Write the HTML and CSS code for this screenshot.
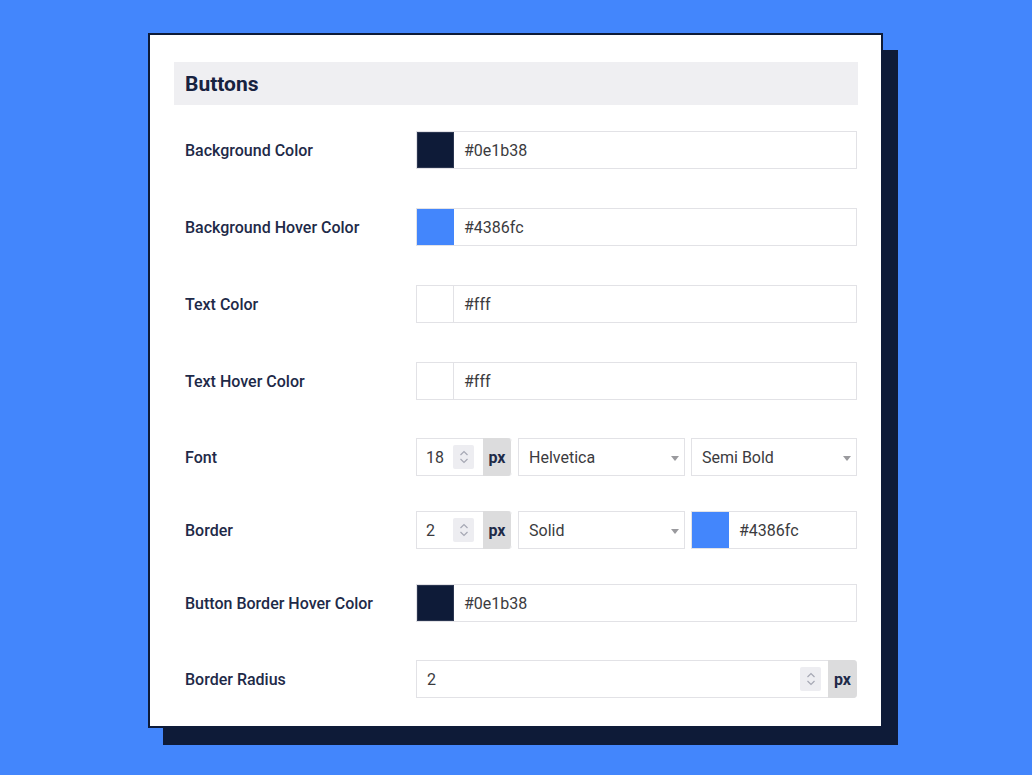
FILE: index.html
```html
<!DOCTYPE html>
<html>
<head>
<meta charset="utf-8">
<link rel="stylesheet" href="styles.css">
</head>
<body>
<div class="card">
  <div class="section-title">Buttons</div>

  <div class="row g-first">
    <div class="label">Background Color</div>
    <div class="field color-field">
      <span class="swatch sw-dark"></span><span class="value">#0e1b38</span>
    </div>
  </div>

  <div class="row g-l">
    <div class="label">Background Hover Color</div>
    <div class="field color-field">
      <span class="swatch sw-blue"></span><span class="value">#4386fc</span>
    </div>
  </div>

  <div class="row g-l">
    <div class="label">Text Color</div>
    <div class="field color-field">
      <span class="swatch sw-white"></span><span class="value">#fff</span>
    </div>
  </div>

  <div class="row g-l">
    <div class="label">Text Hover Color</div>
    <div class="field color-field">
      <span class="swatch sw-white"></span><span class="value">#fff</span>
    </div>
  </div>

  <div class="row g-m">
    <div class="label">Font</div>
    <div class="controls">
      <div class="num">
        <span class="num-val">18</span>
        <span class="spin"><svg width="12" height="18" viewBox="0 0 12 18"><path d="M2.5 7 L6 3.5 L9.5 7" fill="none" stroke="#a6a8b4" stroke-width="1.2"/><path d="M2.5 11 L6 14.5 L9.5 11" fill="none" stroke="#a6a8b4" stroke-width="1.2"/></svg></span>
        <span class="unit">px</span>
      </div>
      <div class="select sel-a"><span class="value">Helvetica</span><span class="caret"></span></div>
      <div class="select sel-b"><span class="value">Semi Bold</span><span class="caret"></span></div>
    </div>
  </div>

  <div class="row g-s">
    <div class="label">Border</div>
    <div class="controls">
      <div class="num">
        <span class="num-val">2</span>
        <span class="spin"><svg width="12" height="18" viewBox="0 0 12 18"><path d="M2.5 7 L6 3.5 L9.5 7" fill="none" stroke="#a6a8b4" stroke-width="1.2"/><path d="M2.5 11 L6 14.5 L9.5 11" fill="none" stroke="#a6a8b4" stroke-width="1.2"/></svg></span>
        <span class="unit">px</span>
      </div>
      <div class="select sel-a"><span class="value">Solid</span><span class="caret"></span></div>
      <div class="field color-field sel-b">
        <span class="swatch sw-blue"></span><span class="value">#4386fc</span>
      </div>
    </div>
  </div>

  <div class="row g-s">
    <div class="label">Button Border Hover Color</div>
    <div class="field color-field">
      <span class="swatch sw-dark"></span><span class="value">#0e1b38</span>
    </div>
  </div>

  <div class="row g-m">
    <div class="label">Border Radius</div>
    <div class="num wide">
      <span class="num-val grow">2</span>
      <span class="spin"><svg width="12" height="18" viewBox="0 0 12 18"><path d="M2.5 7 L6 3.5 L9.5 7" fill="none" stroke="#a6a8b4" stroke-width="1.2"/><path d="M2.5 11 L6 14.5 L9.5 11" fill="none" stroke="#a6a8b4" stroke-width="1.2"/></svg></span>
      <span class="unit">px</span>
    </div>
  </div>
</div>
</body>
</html>
```

FILE: styles.css
```css
html, body {
  margin: 0;
  padding: 0;
}
body {
  background: #4386fc;
  width: 1032px;
  height: 775px;
  overflow: hidden;
  font-family: Roboto, "Liberation Sans", Arial, sans-serif;
}
.card {
  box-sizing: border-box;
  margin: 33px 0 0 148px;
  width: 735px;
  height: 695px;
  background: #ffffff;
  border: 2px solid #0e1b38;
  box-shadow: 15px 17px 0 #0e1b38;
  padding: 27px 23px 0 24px;
  display: flex;
  flex-direction: column;
}
.section-title {
  height: 43px;
  background: #efeff2;
  padding-left: 11px;
  display: flex;
  align-items: center;
  font-size: 21px;
  font-weight: 700;
  color: #17223f;
  padding-top: 1px;
  box-sizing: border-box;
}
.row {
  display: flex;
  align-items: center;
  height: 38px;
}
.g-first { margin-top: 26px; }
.g-l { margin-top: 39px; }
.g-m { margin-top: 38px; }
.g-s { margin-top: 35px; }
.label {
  width: 242px;
  padding-left: 11px;
  box-sizing: border-box;
  font-size: 16px;
  font-weight: 500;
  color: #1e2a48;
  flex-shrink: 0;
}
.field {
  box-sizing: border-box;
  height: 38px;
  border: 1px solid #e2e2e6;
  display: flex;
  align-items: center;
}
.color-field {
  width: 441px;
}
.swatch {
  width: 37px;
  height: 36px;
  flex-shrink: 0;
  box-sizing: border-box;
}
.sw-dark { background: #0e1b38; border: 1px solid #2a3550; }
.sw-blue { background: #4386fc; }
.sw-white { background: #ffffff; border-right: 1px solid #e2e2e6; }
.value {
  font-size: 16px;
  color: #3b3b3e;
  padding-left: 10px;
}
.controls {
  display: flex;
  gap: 6px;
  width: 441px;
}
.num {
  box-sizing: border-box;
  width: 96px;
  height: 38px;
  border: 1px solid #e2e2e6;
  border-right: none;
  border-radius: 0 4px 4px 0;
  display: flex;
  align-items: center;
}
.num.wide {
  width: 441px;
}
.num-val {
  font-size: 16px;
  color: #3b3b3e;
  padding-left: 9px;
  width: 36px;
  box-sizing: border-box;
}
.num-val.grow {
  flex: 1;
  width: auto;
  padding-left: 10px;
}
.spin {
  width: 21px;
  height: 24px;
  background: #ededf1;
  border-radius: 2px;
  display: flex;
  align-items: center;
  justify-content: center;
  margin-right: 9px;
}
.num.wide .spin {
  margin-right: 7px;
}
.unit {
  width: 28px;
  height: 38px;
  margin-top: -1px;
  margin-bottom: -1px;
  background: #dcdcdd;
  border-radius: 0 4px 4px 0;
  display: flex;
  align-items: center;
  justify-content: center;
  font-size: 16px;
  font-weight: 700;
  color: #1e2a48;
  flex-shrink: 0;
}
.num.wide .unit {
  width: 29px;
}
.select {
  box-sizing: border-box;
  height: 38px;
  border: 1px solid #e2e2e6;
  display: flex;
  align-items: center;
  justify-content: space-between;
  padding-right: 5px;
}
.sel-a { width: 167px; }
.sel-b { width: 166px; }
.caret {
  width: 0;
  height: 0;
  border-left: 4px solid transparent;
  border-right: 4px solid transparent;
  border-top: 5px solid #9a9a9e;
  margin-top: 2px;
}
```
